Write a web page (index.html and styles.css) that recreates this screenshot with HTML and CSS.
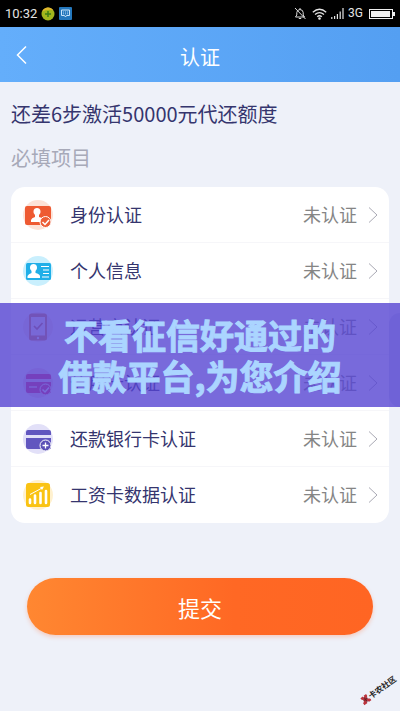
FILE: index.html
```html
<!DOCTYPE html>
<html lang="zh-CN">
<head>
<meta charset="utf-8">
<meta name="viewport" content="width=device-width, initial-scale=1">
<title>认证</title>
<link rel="stylesheet" href="styles.css">
</head>
<body>
<div class="status-bar">
  <span class="time">10:32</span>
  <svg class="app-icon" width="14" height="14" viewBox="0 0 14 14" aria-hidden="true"><circle cx="7" cy="7" r="6.500" fill="#a2b51d"/><path d="M1 4.500A6.500 6.500 0 0 1 12.500 3.500Q7 1.500 1 4.500Z" fill="#e1b62c"/><path d="M7 4v6M4 7h6" stroke="#3e7d16" stroke-width="1.500"/></svg>
  <svg class="app-icon" width="13" height="13" viewBox="0 0 13 13" aria-hidden="true"><rect width="13" height="13" rx="1" fill="#2478bd"/><path d="M2.500 3h8v5.500h-3l-1 1.500-1-1.500h-3z" fill="none" stroke="#c9e5fa"/><path d="M4 5h5M4 6.800h5" stroke="#c9e5fa" stroke-width=".8" stroke-dasharray="1 1"/></svg>
  <span class="spacer"></span>
  <svg width="12" height="13" viewBox="0 0 12 13" fill="none" stroke="#ddd" aria-hidden="true"><path d="M1.500 10h9L9.200 8V5.500Q9 2.800 6 2.500 3 2.800 2.800 5.500V8zM6 1v1.500M4.800 11.500h2.400M1 1l10.500 11"/></svg>
  <svg class="wifi" width="15" height="12" viewBox="0 0 15 12" fill="none" stroke="#e4e4e4" stroke-width="1.300" aria-hidden="true"><path d="M.8 4.200Q7.500-1.600 14.200 4.200M3 6.600q4.500-3.800 9 0M5.200 8.800q2.300-2 4.600 0"/><circle cx="7.500" cy="10.500" r=".7" fill="#e4e4e4"/></svg>
  <svg width="13" height="12" viewBox="0 0 13 12" stroke="#e4e4e4" stroke-width="1.200" aria-hidden="true"><path d="M.8 11V9M3.600 11V8M6.400 11V6M9.200 11V3.500M12 11V0"/></svg>
  <span class="network">3G</span>
  <svg class="battery" width="26" height="10" viewBox="0 0 26 10" aria-hidden="true"><rect x=".5" y=".5" width="23" height="9" fill="none" stroke="#eee"/><rect x="2" y="2" width="19" height="6" fill="#eee"/><rect x="24" y="3" width="2" height="4" fill="#eee"/></svg>
</div>

<header class="header">
  <button class="back" type="button" aria-label="返回"><svg width="12" height="20" viewBox="0 0 12 20" fill="none" stroke="#fff" stroke-width="1.500"><path d="M10 1.500 1.500 10 10 18.500"/></svg></button>
  <h1>认证</h1>
</header>

<main class="content">
  <h2 class="progress">还差6步激活50000元代还额度</h2>
  <h3 class="section-title">必填项目</h3>
  <ul class="list">
    <li><a class="row" href="#identity">
      <svg class="icon" viewBox="0 0 32 32" aria-hidden="true"><circle cx="16" cy="16" r="15" fill="#fde2d7"/><rect x="3" y="7" width="26" height="19" rx="2" fill="#ee5a32"/><path d="M9 23v-2q.5-2 4-3v-2q-2-2-1.500-4Q12 9 15 9t3.500 3q.5 2-1.500 4v2l3 1v4z" fill="#fff"/><circle cx="23.500" cy="23" r="5.500" fill="#ed5e37" stroke="#fff"/><path d="m20.500 23 2.500 2.500 4-4.500" fill="none" stroke="#fff" stroke-width="1.500"/></svg>
      <span class="label">身份认证</span><span class="state">未认证</span>
      <svg class="chevron" viewBox="0 0 10 18" aria-hidden="true"><path d="m1 1.500 8 7.500-8 7.500"/></svg>
    </a></li>
    <li><a class="row" href="#profile">
      <svg class="icon" viewBox="0 0 32 32" aria-hidden="true"><circle cx="16" cy="16" r="15" fill="#c9effd"/><rect x="4" y="8" width="25" height="17" rx="1.500" fill="#20afe8"/><path d="M5.500 23v-2q1-2 4-3v-2q-2-2-1.500-4Q8.500 9 11.500 9t3.500 3q.5 2-1.500 4v2q4 1 4.500 3v2z" fill="#fff"/><path d="M19 11.500h8M21 15h6M21 18.500h6M20 22h7" stroke="#fff" stroke-width="1.200"/></svg>
      <span class="label">个人信息</span><span class="state">未认证</span>
      <svg class="chevron" viewBox="0 0 10 18" aria-hidden="true"><path d="m1 1.500 8 7.500-8 7.500"/></svg>
    </a></li>
    <li><a class="row" href="#carrier">
      <svg class="icon" viewBox="0 0 32 32" aria-hidden="true"><circle cx="16" cy="16" r="15" fill="#faeae4"/><rect x="7" y="2.500" width="18" height="27" rx="2.500" fill="#e08a50"/><rect x="9" y="6" width="14" height="18.500" fill="#fff3ea"/><path d="m12 15 3 3 5.500-6" fill="none" stroke="#c77957" stroke-width="1.700"/><circle cx="16" cy="27" r="1.200" fill="#fff"/></svg>
      <span class="label">运营商认证</span><span class="state">未认证</span>
      <svg class="chevron" viewBox="0 0 10 18" aria-hidden="true"><path d="m1 1.500 8 7.500-8 7.500"/></svg>
    </a></li>
    <li><a class="row" href="#credit-card">
      <svg class="icon" viewBox="0 0 32 32" aria-hidden="true"><circle cx="16" cy="16" r="15" fill="#f8dce5"/><path d="M6 7h21q2 0 2 2v3H4V9q0-2 2-2zM4 15h25v11H6q-2 0-2-2z" fill="#f0306a"/><path d="M7 20h8" stroke="#fff" stroke-width="1.200"/><circle cx="23.500" cy="22.500" r="5.500" fill="#f0306a" stroke="#fff"/><path d="m20.500 22.500 2.500 2.500 4-4.500" fill="none" stroke="#fff" stroke-width="1.500"/></svg>
      <span class="label">信用卡认证</span><span class="state">未认证</span>
      <svg class="chevron" viewBox="0 0 10 18" aria-hidden="true"><path d="m1 1.500 8 7.500-8 7.500"/></svg>
    </a></li>
    <li><a class="row" href="#repayment-card">
      <svg class="icon" viewBox="0 0 32 32" aria-hidden="true"><circle cx="16" cy="16" r="15" fill="#e2e0f8"/><path d="M6 7h21q2 0 2 2v3H4V9q0-2 2-2zM4 15h25v11H6q-2 0-2-2z" fill="#6156bf"/><circle cx="23.500" cy="22.500" r="5.500" fill="#5b50b6" stroke="#fff"/><path d="M23.500 19.500v6M20.500 22.500h6" stroke="#fff" stroke-width="1.300"/></svg>
      <span class="label">还款银行卡认证</span><span class="state">未认证</span>
      <svg class="chevron" viewBox="0 0 10 18" aria-hidden="true"><path d="m1 1.500 8 7.500-8 7.500"/></svg>
    </a></li>
    <li><a class="row" href="#salary-card">
      <svg class="icon" viewBox="0 0 32 32" aria-hidden="true"><circle cx="16" cy="16" r="15" fill="#fff1cf"/><rect x="4" y="4" width="24" height="24" rx="2.500" fill="#fac313"/><path d="M8 24v-3.500M13 24v-7.500M18.500 24V14M24 24V12" stroke="#fff" stroke-width="2.600" stroke-linecap="round"/><path d="m8 15.500 13-7" fill="none" stroke="#fff"/><path d="m18 8 4-.5-2 3.500z" fill="#fff"/></svg>
      <span class="label">工资卡数据认证</span><span class="state">未认证</span>
      <svg class="chevron" viewBox="0 0 10 18" aria-hidden="true"><path d="m1 1.500 8 7.500-8 7.500"/></svg>
    </a></li>
  </ul>
  <button class="submit" type="button">提交</button>
</main>

<div class="side-handle"></div>
<div class="banner"><p>不看征信好通过的<br>借款平台,为您介绍</p></div>
<div class="watermark">
  <svg width="9" height="10" viewBox="0 0 9 10" aria-hidden="true"><path d="M1 1h3v2h1V1h3v2L6 5l3 2v2H6L5 7H4v2H0V7l3-2-2-2z" fill="#bb343d"/><path d="M2 5h5M4.500 2v6" stroke="#681e26"/></svg>
  <span>卡农社区</span>
</div>
</body>
</html>
```

FILE: styles.css
```css
* {
  box-sizing: border-box;
}

body {
  position: relative;
  min-height: 100vh;
  margin: 0;
  overflow-x: hidden;
  background: #eef1f9;
  color: #35356e;
  font-family: "Noto Sans CJK SC", sans-serif;
}

h1, h2, h3, p, ul {
  margin: 0;
  padding: 0;
  font-weight: 400;
}

button {
  border: 0;
  padding: 0;
  font-family: inherit;
  cursor: pointer;
}

.status-bar {
  display: flex;
  align-items: center;
  gap: 4px;
  height: 27px;
  padding: 0 5px;
  background: #000;
  color: #e4e4e4;
  font: 13px/27px Roboto, sans-serif;
}

.spacer {
  flex: 1;
}

.wifi {
  margin-left: 2px;
}

.network {
  font-size: 12px;
}

.battery {
  margin-left: 2px;
}

.header {
  display: grid;
  grid-template-columns: 44px 1fr 44px;
  align-items: center;
  height: 55px;
  background: linear-gradient(90deg, #64aefb, #549ff2);
  color: #fff;
}

.back {
  display: flex;
  align-items: center;
  justify-content: center;
  height: 55px;
  background: none;
}

.header h1 {
  padding-top: 4px;
  font-size: 20px;
  line-height: 24px;
  text-align: center;
}

.content {
  padding: 20px 11px;
}

.progress {
  font-size: 20px;
  line-height: 24px;
}

.section-title {
  margin-top: 20px;
  color: #a7a9b8;
  font-size: 20px;
  line-height: 24px;
}

.list {
  margin-top: 17px;
  border-radius: 14px;
  background: #fff;
  list-style: none;
}

.row {
  display: flex;
  align-items: center;
  height: 56px;
  padding: 0 11px;
  border-bottom: 1px solid #f6f6f9;
  color: inherit;
  font-size: 18px;
  line-height: 23px;
  text-decoration: none;
}

.list li:last-child .row {
  border-bottom-color: transparent;
}

.icon {
  width: 32px;
  height: 32px;
}

.label {
  flex: 1;
  margin-left: 16px;
}

.state {
  color: #858585;
}

.chevron {
  width: 10px;
  height: 18px;
  margin-left: 11px;
  fill: none;
  stroke: #a9a9b4;
}

.submit {
  display: block;
  width: calc(100% - 32px);
  height: 57px;
  margin: 55px auto 0;
  border-radius: 29px;
  background: linear-gradient(90deg, #ff8731, #ff6824 60%, #ff6523);
  box-shadow: 0 2px 4px #ff74404d;
  color: #fff;
  font-size: 22px;
  line-height: 28px;
}

.side-handle {
  position: absolute;
  top: 313px;
  right: 0;
  width: 11px;
  height: 94px;
  border-radius: 11px 0 0 11px;
  background: #d3d6ea;
}

.banner {
  position: absolute;
  top: 303px;
  right: 0;
  left: 0;
  padding: 11px 0;
  background: #5645d2cc;
}

.banner p {
  color: #abd5ff;
  font-size: 34px;
  font-weight: 700;
  line-height: 41px;
  text-align: center;
  -webkit-text-stroke: 1px #abd5ff;
}

.watermark {
  position: absolute;
  right: 1px;
  bottom: 15px;
  display: flex;
  align-items: center;
  color: #222;
  font-size: 8px;
  font-weight: 700;
  line-height: 12px;
  transform: rotate(-36deg);
}
```
